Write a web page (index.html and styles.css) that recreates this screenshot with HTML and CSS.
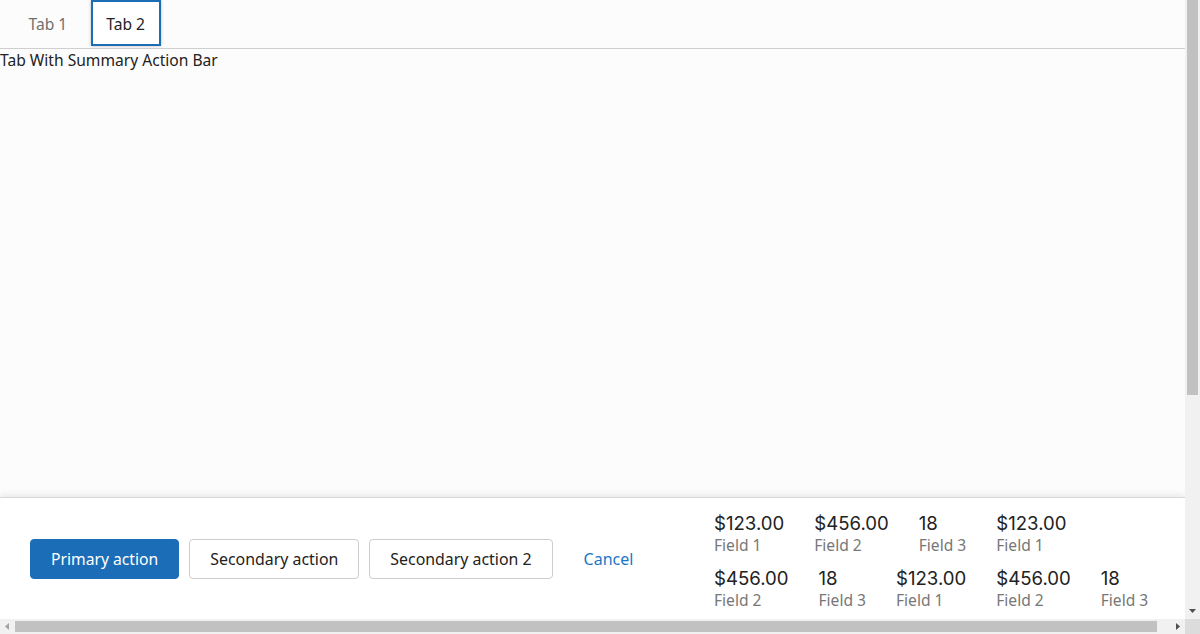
FILE: index.html
```html
<!DOCTYPE html>
<html lang="en">
<head>
<meta charset="utf-8">
<title>Tab With Summary Action Bar</title>
<link rel="stylesheet" href="styles.css">
</head>
<body>
<div class="frame">
  <div class="scroller">
    <div class="tabs" role="tablist">
      <button class="tab" role="tab">Tab 1</button>
      <button class="tab tab-active" role="tab">Tab 2</button>
    </div>
    <div class="panel">Tab With Summary Action Bar</div>
  </div>
  <div class="action-bar">
    <div class="actions">
      <button class="btn btn-primary">Primary action</button>
      <button class="btn btn-secondary">Secondary action</button>
      <button class="btn btn-secondary">Secondary action 2</button>
      <button class="btn btn-link">Cancel</button>
    </div>
    <div class="summary">
      <div class="field"><div class="value">$123.00</div><div class="label">Field 1</div></div>
      <div class="field"><div class="value">$456.00</div><div class="label">Field 2</div></div>
      <div class="field"><div class="value">18</div><div class="label">Field 3</div></div>
      <div class="field"><div class="value">$123.00</div><div class="label">Field 1</div></div>
      <div class="field"><div class="value">$456.00</div><div class="label">Field 2</div></div>
      <div class="field"><div class="value">18</div><div class="label">Field 3</div></div>
      <div class="field"><div class="value">$123.00</div><div class="label">Field 1</div></div>
      <div class="field"><div class="value">$456.00</div><div class="label">Field 2</div></div>
      <div class="field"><div class="value">18</div><div class="label">Field 3</div></div>
    </div>
  </div>
  <div class="vscroll" aria-hidden="true">
    <div class="vthumb"></div>
    <svg class="arrow-down" width="7" height="4" viewBox="0 0 7 4"><polygon points="0,0 7,0 3.5,4" fill="#505050"/></svg>
  </div>
  <div class="hscroll" aria-hidden="true">
    <svg class="arrow-left" width="4" height="7" viewBox="0 0 4 7"><polygon points="4,0 4,7 0,3.5" fill="#a3a3a3"/></svg>
    <div class="hthumb"></div>
    <svg class="arrow-right" width="4" height="7" viewBox="0 0 4 7"><polygon points="0,0 0,7 4,3.5" fill="#505050"/></svg>
  </div>
  <div class="corner" aria-hidden="true"></div>
</div>
</body>
</html>
```
FILE: styles.css
```css
html, body {
  margin: 0;
  padding: 0;
  overflow: hidden;
}
body {
  background: #fcfcfc;
  font-family: "Noto Sans", "Open Sans", sans-serif;
  color: #222;
  font-size: 15.6px;
}
.frame {
  position: relative;
  width: 1200px;
  height: 634px;
  overflow: hidden;
}
.scroller {
  width: 1185px;
  height: 619px;
  overflow: hidden;
}
.tabs {
  display: flex;
  gap: 8px;
  padding-left: 13px;
  height: 48px;
  border-bottom: 1px solid #cfcfcf;
  align-items: flex-start;
}
.tab {
  font-family: inherit;
  font-size: 15.6px;
  background: none;
  border: 2px solid transparent;
  color: #707070;
  height: 46px;
  padding: 2px 13.5px 0;
  margin: 0;
}
.tab-active {
  color: #222;
  border-color: #1b6db4;
  background: #fff;
  box-shadow: 0 0 3px rgba(0,0,0,0.25);
}
.panel {
  line-height: 22px;
}
.action-bar {
  position: absolute;
  left: 0;
  bottom: 15px;
  width: 1185px;
  height: 122px;
  box-sizing: border-box;
  padding: 0 19px 0 30px;
  background: #fff;
  border-top: 1px solid #d8d8d8;
  box-shadow: 0 -3px 6px rgba(0,0,0,0.07);
  display: flex;
  align-items: center;
}
.actions {
  display: flex;
  align-items: center;
  gap: 10px;
}
.btn {
  font-family: inherit;
  font-size: 15.7px;
  height: 40px;
  padding: 0 20px;
  border-radius: 4px;
  border: 1px solid #cdcdcd;
  background: #fff;
  color: #222;
  margin: 0;
}
.btn-primary {
  background: #1a6db6;
  border-color: #1a6db6;
  color: #fff;
}
.btn-secondary {
  font-size: 15.9px;
}
.btn-link {
  border-color: transparent;
  color: #1e77c6;
  font-size: 16px;
}
.summary {
  margin-left: auto;
  margin-top: 6px;
  width: 452px;
  display: flex;
  flex-wrap: wrap;
  column-gap: 30px;
  row-gap: 11px;
}
.value {
  font-family: Inter, "Open Sans", sans-serif;
  font-size: 18.6px;
  line-height: 22px;
  color: #222;
}
.label {
  font-size: 15.6px;
  line-height: 22px;
  color: #777;
}
.vscroll {
  position: absolute;
  top: 0;
  right: 0;
  width: 15px;
  height: 619px;
  background: #f1f1f1;
}
.vthumb {
  position: absolute;
  top: 0;
  left: 2px;
  width: 11px;
  height: 395px;
  background: #c1c1c1;
}
.arrow-down {
  position: absolute;
  left: 4px;
  top: 609px;
  display: block;
}
.hscroll {
  position: absolute;
  left: 0;
  bottom: 0;
  width: 1185px;
  height: 15px;
  background: #f1f1f1;
}
.hthumb {
  position: absolute;
  left: 15px;
  top: 2px;
  width: 1142px;
  height: 11px;
  background: #c1c1c1;
}
.arrow-left {
  position: absolute;
  left: 5px;
  top: 4px;
  display: block;
}
.arrow-right {
  position: absolute;
  left: 1176px;
  top: 4px;
  display: block;
}
.corner {
  position: absolute;
  right: 0;
  bottom: 0;
  width: 15px;
  height: 15px;
  background: #dcdcdc;
}
```
